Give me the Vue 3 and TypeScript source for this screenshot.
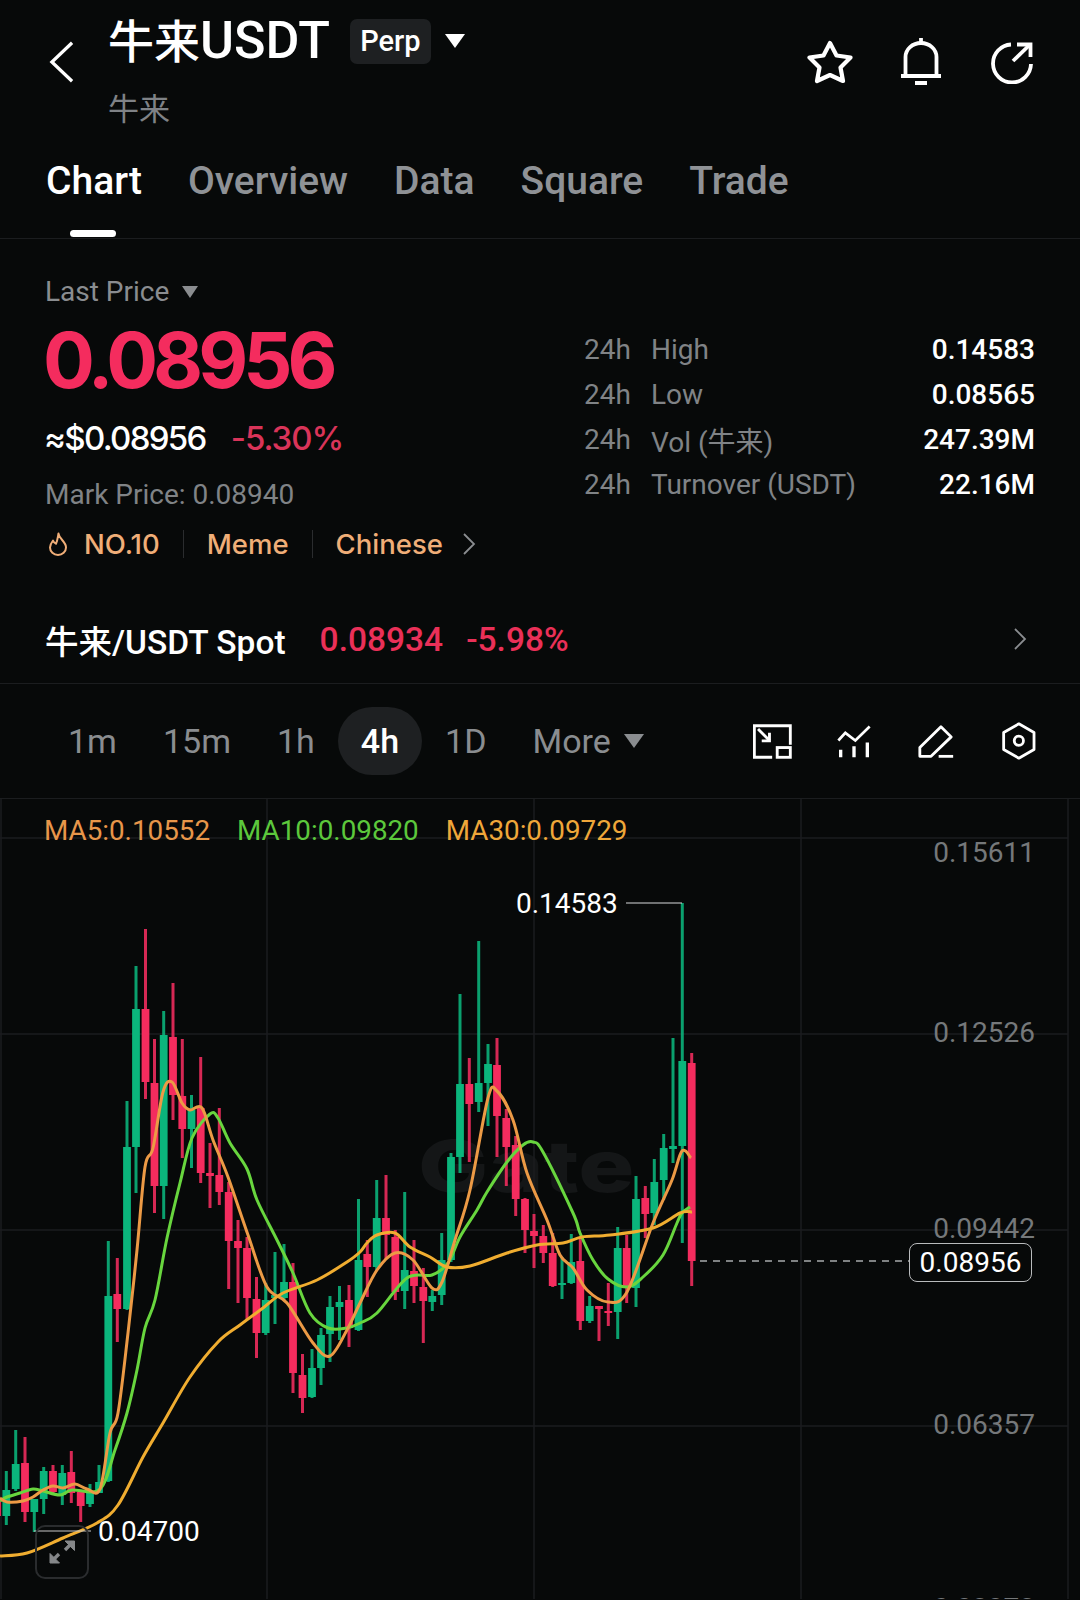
<template>
  <div class="page">
    <header class="top-bar">
      <svg class="back" viewBox="0 0 26 42" fill="none" stroke="#fff" stroke-width="3.4">
        <path d="M24 1 L3 21 L24 41" />
      </svg>
      <div class="title-block">
        <div class="title-row">
          <span class="title">牛来<span class="title-latin">USDT</span></span>
          <span class="perp">Perp</span>
          <i class="caret caret-white"></i>
        </div>
        <div class="subtitle">牛来</div>
      </div>
      <div class="actions">
        <svg class="icon-star" viewBox="0 0 46 44" fill="none" stroke="#fff" stroke-width="4.2" stroke-linejoin="round">
          <path d="M23 3 L29.5 15.5 L43.5 17.5 L33.5 27.5 L36 41 L23 35 L10 41 L12.5 27.5 L2.5 17.5 L16.5 15.5 Z" />
        </svg>
        <svg class="icon-bell" viewBox="0 0 40 47" fill="none" stroke="#fff" stroke-width="3.8">
          <path d="M4.5 37 V19 A15.5 14 0 0 1 35.5 19 V37" />
          <path d="M0 38 H40" />
          <path d="M20 0 V6" />
          <path d="M14 45 H26" stroke-width="4" />
        </svg>
        <svg class="icon-share" viewBox="0 0 42 42" fill="none" stroke="#fff" stroke-width="3.8">
          <path d="M20 2.5 A19 19 0 1 0 40 22" />
          <path d="M22 19 L38 3.5" />
          <path d="M26 2.5 H39.5 V15" />
        </svg>
      </div>
    </header>

    <nav class="tabs">
      <span v-for="(t, i) in tabs" :key="t" class="tab" :class="{ active: i === 0 }">{{ t }}</span>
    </nav>

    <section class="quote">
      <div class="quote-left">
        <div class="last-label">Last Price <i class="caret caret-gray"></i></div>
        <div class="price">0.08956</div>
        <div class="sub-price">
          <span class="usd">≈$0.08956</span>
          <span class="change">-5.30%</span>
        </div>
        <div class="mark">Mark Price: 0.08940</div>
        <div class="tags">
          <svg class="flame" viewBox="0 0 20 24" fill="none" stroke="#f0ae78" stroke-width="2" stroke-linejoin="round">
            <path d="M10.500 1.500 C11 7 18 9.500 18 15.500 A8 7.500 0 0 1 2 15.500 C2 12.500 3.500 10.500 5 8.500 C5.800 10.500 6.800 11.500 8 11.800 C9.500 8.500 9.800 5 10.500 1.500 Z" />
          </svg>
          <span class="tag-first">NO.10</span>
          <span class="tag-sep"></span>
          <span>Meme</span>
          <span class="tag-sep"></span>
          <span>Chinese</span>
          <svg class="tag-chevron" viewBox="0 0 14 24" fill="none" stroke="#8a8d90" stroke-width="1.8">
            <path d="M2 2 L12 12 L2 22" />
          </svg>
        </div>
      </div>
      <div class="quote-right">
        <div v-for="s in stats" :key="s.label" class="stat">
          <span class="stat-period">24h</span>
          <span class="stat-label">{{ s.label }}</span>
          <span class="stat-value">{{ s.value }}</span>
        </div>
      </div>
    </section>

    <div class="spot-row">
      <span class="spot-name">牛来/USDT Spot</span>
      <span class="spot-price">0.08934</span>
      <span class="spot-change">-5.98%</span>
      <svg class="spot-chevron" viewBox="0 0 14 24" fill="none" stroke="#8a8d90" stroke-width="1.8">
        <path d="M2 2 L12 12 L2 22" />
      </svg>
    </div>

    <div class="toolbar">
      <span v-for="f in frames" :key="f" class="frame" :class="{ selected: f === '4h' }">{{ f }}</span>
      <span class="frame more">More <i class="caret caret-more"></i></span>
      <div class="tools">
        <svg class="tool t1" viewBox="160 103 116 104" fill="none" stroke="#fff" stroke-width="8.500">
          <path d="M217 202 H164 V108 H271 V165" />
          <rect x="232" y="173" width="39" height="29" />
          <path d="M175 118 L209 152" />
          <path d="M209 129 V153 H186" />
        </svg>
        <svg class="tool t2" viewBox="412 105 102 98" fill="none" stroke="#fff" stroke-width="8">
          <path d="M416 151 L437 128 L467 151 L510 109" />
          <path d="M423 179 V201 M463 168 V201 M503 157 V201" stroke-width="10" />
        </svg>
        <svg class="tool t3" viewBox="656 102 108 100" fill="none" stroke="#fff" stroke-width="8.500" stroke-linejoin="round">
          <path d="M661 197 V170 L725 107 L756 138 L695 197 Z" />
          <path d="M718 197 H762" />
        </svg>
        <svg class="tool t4" viewBox="904 99 103 114" fill="none" stroke="#fff" stroke-width="8.500" stroke-linejoin="round">
          <path d="M955 104 L1001 130 V182 L955 208 L909 182 V130 Z" />
          <circle cx="955" cy="155" r="14" />
        </svg>
      </div>
    </div>

    <div class="chart">
      <span class="watermark">Gate</span>
      <svg class="plot" viewBox="0 798 1080 802" width="1080" height="802" fill="none">
        <g stroke="#1b1d1f" stroke-width="1.500">
          <path v-for="y in gridY" :key="y" :d="`M0 ${y} H1068`" />
          <path v-for="x in gridX" :key="x" :d="`M${x} 798 V1600`" />
        </g>
        <g v-for="c in candleList" :key="c.x">
          <path :d="`M${c.x} ${c.wickTop} V${c.wickBottom}`" :stroke="c.color" stroke-width="3" stroke-opacity="0.88" />
          <rect :x="c.x - 3.900" :y="c.top" width="7.800" :height="c.height" :fill="c.color" />
        </g>
        <path :d="ma10Path" stroke="#68d63e" stroke-width="3" />
        <path :d="ma5Path" stroke="#ec9a45" stroke-width="3" />
        <path :d="ma30Path" stroke="#f0ad30" stroke-width="3" />
        <path d="M626 903 H682" stroke="#d8dadb" stroke-width="1.200" />
        <path d="M34 1531 H91" stroke="#c8c8c8" stroke-width="1.200" />
        <path d="M700 1261 H909" stroke="#a8aaac" stroke-width="1.500" stroke-dasharray="7 6" />
      </svg>
      <div class="legend">
        <span class="ma5">MA5:0.10552</span>
        <span class="ma10">MA10:0.09820</span>
        <span class="ma30">MA30:0.09729</span>
      </div>
      <span v-for="a in axis" :key="a.text" class="axis-label" :style="{ top: a.y - 798 - 18 + 'px' }">{{ a.text }}</span>
      <span class="peak peak-high">0.14583</span>
      <span class="peak peak-low">0.04700</span>
      <span class="current">0.08956</span>
      <div class="expand">
        <svg viewBox="0 0 28 26" fill="none" stroke="#858789" stroke-width="3.400">
          <path d="M3 23 L11 15" />
          <path d="M17 11 L25 3" />
          <path d="M2 14.500 V24 H11.500 Z" fill="#858789" stroke-width="1" />
          <path d="M17 2 H26.500 V11.500 Z" fill="#858789" stroke-width="1" />
        </svg>
      </div>
    </div>
  </div>
</template>

<script setup lang="ts">
import { computed } from 'vue'

type Point = [number, number]
// x, colour, wick top, body top, body bottom, wick bottom
type Candle = [number, 'g' | 'r', number, number, number, number]

const tabs = ['Chart', 'Overview', 'Data', 'Square', 'Trade']
const frames = ['1m', '15m', '1h', '4h', '1D']
const stats = [
  { label: 'High', value: '0.14583' },
  { label: 'Low', value: '0.08565' },
  { label: 'Vol (牛来)', value: '247.39M' },
  { label: 'Turnover (USDT)', value: '22.16M' }
]
const axis = [
  { text: '0.15611', y: 852 },
  { text: '0.12526', y: 1032 },
  { text: '0.09442', y: 1228 },
  { text: '0.06357', y: 1424 },
  { text: '0.03273', y: 1608 }
]
const gridY = [838, 1034, 1230, 1426]
const gridX = [1, 267, 534, 801, 1068]

const candles: Candle[] = [
  [-3, 'r', 1500, 1500, 1516, 1517], [6.3, 'g', 1471, 1490, 1516, 1525], [15.7, 'g', 1430, 1464, 1489, 1491],
  [25, 'r', 1437, 1463, 1512, 1522], [34.3, 'g', 1499, 1499, 1512, 1532], [43.7, 'g', 1467, 1471, 1499, 1514],
  [53, 'r', 1465, 1471, 1492, 1493], [62.3, 'g', 1465, 1473, 1495, 1505], [71.3, 'r', 1451, 1472, 1493, 1503],
  [80.7, 'r', 1490, 1492, 1506, 1522], [90, 'g', 1484, 1493, 1504, 1507], [99, 'g', 1465, 1482, 1493, 1493],
  [108.3, 'g', 1241, 1296, 1481, 1482], [117.3, 'r', 1258, 1294, 1309, 1342], [127, 'g', 1101, 1147, 1309, 1310],
  [136, 'g', 966, 1009, 1147, 1193], [145.500, 'r', 929, 1009, 1082, 1099], [154.500, 'r', 1039, 1083, 1186, 1213],
  [163.700, 'g', 1011, 1035, 1186, 1219], [173, 'r', 983, 1037, 1095, 1120], [182.300, 'r', 1039, 1096, 1129, 1158],
  [191.500, 'g', 1095, 1110, 1129, 1168], [200.700, 'r', 1057, 1108, 1173, 1183], [210, 'r', 1143, 1173, 1176, 1208],
  [219.300, 'r', 1108, 1175, 1192, 1205], [228.700, 'r', 1182, 1192, 1241, 1289], [238, 'r', 1220, 1241, 1248, 1303],
  [247, 'r', 1237, 1248, 1298, 1319], [256.500, 'r', 1277, 1299, 1333, 1358], [265.700, 'g', 1283, 1300, 1333, 1335],
  [275, 'g', 1252, 1295, 1298, 1324], [284, 'g', 1244, 1282, 1298, 1300], [293, 'r', 1263, 1282, 1373, 1393],
  [302.500, 'r', 1354, 1375, 1398, 1413], [312, 'g', 1349, 1368, 1397, 1398], [321, 'g', 1328, 1335, 1368, 1385],
  [330, 'g', 1296, 1307, 1334, 1362], [339.500, 'g', 1286, 1302, 1307, 1340], [349, 'r', 1285, 1300, 1328, 1347],
  [358.500, 'g', 1199, 1260, 1330, 1331], [367.300, 'r', 1240, 1254, 1267, 1297], [376.700, 'g', 1180, 1218, 1267, 1270],
  [386, 'r', 1175, 1218, 1235, 1259], [395.300, 'r', 1230, 1237, 1292, 1300], [404.700, 'g', 1192, 1270, 1291, 1309],
  [414, 'r', 1240, 1271, 1286, 1303], [423.300, 'r', 1268, 1287, 1301, 1343], [432.300, 'g', 1290, 1296, 1302, 1311],
  [441.700, 'g', 1233, 1260, 1295, 1305], [451, 'g', 1153, 1157, 1260, 1262], [460, 'g', 994, 1084, 1157, 1173],
  [469.300, 'r', 1058, 1084, 1104, 1162], [478.700, 'g', 941, 1083, 1102, 1112], [488, 'g', 1044, 1064, 1083, 1126],
  [497, 'r', 1038, 1065, 1116, 1157], [506.300, 'r', 1109, 1118, 1147, 1186], [515.700, 'r', 1136, 1145, 1199, 1216],
  [525, 'r', 1198, 1199, 1230, 1253], [534, 'r', 1214, 1231, 1236, 1268], [543.300, 'r', 1225, 1236, 1253, 1263],
  [552.700, 'r', 1233, 1253, 1286, 1287], [562, 'g', 1257, 1283, 1285, 1299], [571.300, 'g', 1234, 1262, 1283, 1284],
  [580.300, 'r', 1238, 1261, 1321, 1330], [589.700, 'g', 1296, 1306, 1321, 1323], [599, 'r', 1306, 1306, 1309, 1341],
  [608.300, 'r', 1283, 1311, 1313, 1326], [617.700, 'g', 1227, 1248, 1312, 1339], [626.700, 'r', 1235, 1248, 1288, 1303],
  [636, 'g', 1176, 1199, 1288, 1307], [645.300, 'r', 1186, 1198, 1214, 1238], [654.300, 'g', 1159, 1182, 1213, 1225],
  [663.700, 'g', 1134, 1148, 1180, 1200], [673, 'g', 1038, 1146, 1149, 1163], [682.300, 'g', 903, 1061, 1146, 1243],
  [691.700, 'r', 1053, 1063, 1261, 1286]
]

const ma5: Point[] = [
  [0, 1498], [7, 1502], [23, 1501], [33, 1497], [43, 1490], [53, 1486], [63, 1488], [75, 1484], [87, 1489], [100, 1489],
  [110, 1433], [118, 1413], [128, 1333], [137, 1250], [145, 1167], [153, 1148], [163, 1092], [172, 1082], [182, 1103],
  [190, 1110], [202, 1108], [213, 1140], [228, 1177], [248, 1235], [267, 1287], [287, 1303], [313, 1343], [330, 1356],
  [347, 1330], [360, 1303], [377, 1270], [395, 1253], [413, 1260], [432, 1288], [442, 1282], [455, 1240], [470, 1190],
  [488, 1098], [497, 1091], [513, 1120], [527, 1173], [547, 1220], [560, 1255], [573, 1268], [587, 1290], [608, 1302],
  [627, 1292], [653, 1223], [672, 1180], [682, 1151], [691, 1158]
]
const ma10: Point[] = [
  [0, 1501], [7, 1497], [20, 1493], [33, 1489], [43, 1491], [60, 1495], [72, 1490], [100, 1489], [115, 1450], [127, 1413],
  [137, 1370], [145, 1328], [155, 1300], [167, 1238], [180, 1183], [192, 1138], [210, 1114], [218, 1118], [230, 1143],
  [247, 1169], [257, 1200], [277, 1240], [293, 1273], [310, 1313], [328, 1328], [347, 1328], [360, 1323], [377, 1313],
  [407, 1278], [432, 1275], [448, 1263], [460, 1237], [477, 1210], [487, 1192], [507, 1162], [523, 1145], [533, 1142],
  [543, 1152], [573, 1213], [580, 1233], [593, 1260], [608, 1279], [627, 1287], [643, 1277], [663, 1255], [677, 1223],
  [682, 1213], [690, 1207]
]
const ma30: Point[] = [
  [0, 1556], [27, 1553], [63, 1538], [97, 1523], [118, 1505], [143, 1457], [163, 1423], [190, 1377], [218, 1342],
  [240, 1325], [263, 1308], [283, 1293], [317, 1280], [347, 1262], [360, 1252], [367, 1243], [377, 1235], [395, 1233],
  [410, 1247], [430, 1257], [447, 1267], [470, 1266], [507, 1253], [537, 1245], [563, 1243], [582, 1237], [610, 1235],
  [653, 1228], [680, 1213], [692, 1212]
]

const candleList = computed(() =>
  candles.map(([x, c, wickTop, top, bottom, wickBottom]) => ({
    x,
    color: c === 'g' ? '#0bb57c' : '#f42c5e',
    wickTop,
    wickBottom,
    top,
    height: bottom - top
  }))
)

// catmull-rom through the sampled points, keeps the MA lines round
const smooth = (pts: Point[]): string => {
  let d = `M${pts[0][0]} ${pts[0][1]}`
  for (let i = 0; i < pts.length - 1; i++) {
    const p0 = pts[Math.max(i - 1, 0)]
    const p1 = pts[i]
    const p2 = pts[i + 1]
    const p3 = pts[Math.min(i + 2, pts.length - 1)]
    const c1x = p1[0] + (p2[0] - p0[0]) / 6
    const c1y = p1[1] + (p2[1] - p0[1]) / 6
    const c2x = p2[0] - (p3[0] - p1[0]) / 6
    const c2y = p2[1] - (p3[1] - p1[1]) / 6
    d += ` C${c1x.toFixed(1)} ${c1y.toFixed(1)} ${c2x.toFixed(1)} ${c2y.toFixed(1)} ${p2[0]} ${p2[1]}`
  }
  return d
}

const ma5Path = computed(() => smooth(ma5))
const ma10Path = computed(() => smooth(ma10))
const ma30Path = computed(() => smooth(ma30))
</script>

<style>
html,
body {
  margin: 0;
  background: #070909;
}
</style>

<style scoped>
.page {
  width: 1080px;
  height: 1600px;
  overflow: hidden;
  background: #070909;
  color: #fff;
  font-family: Roboto, "Noto Sans CJK SC", sans-serif;
}

.top-bar {
  display: flex;
  height: 155px;
  padding: 18px 47px 0 49px;
  box-sizing: border-box;
}

.back {
  width: 25px;
  height: 42px;
  margin-top: 23px;
  flex: none;
}

.title-block {
  margin-left: 34px;
}

.title-row {
  display: flex;
  align-items: center;
  height: 46px;
}

.title {
  font-size: 46px;
  font-weight: 500;
  line-height: 46px;
}

.title-latin {
  font-size: 52px;
}

.perp {
  margin-left: 20px;
  width: 81px;
  height: 45px;
  line-height: 45px;
  text-align: center;
  font-size: 29px;
  font-weight: 500;
  background: #1e2022;
  border-radius: 7px;
}

.caret {
  display: inline-block;
  width: 0;
  height: 0;
  border-style: solid;
  border-color: transparent;
}

.caret-white {
  margin-left: 14px;
  border-width: 14px 10px 0;
  border-top-color: #fff;
}

.caret-gray {
  margin-left: 6px;
  border-width: 12px 8px 0;
  border-top-color: #8a8d90;
  vertical-align: 3px;
}

.caret-more {
  margin-left: 5px;
  border-width: 14px 10px 0;
  border-top-color: #8a8d90;
  vertical-align: 5px;
}

.subtitle {
  margin-top: 28px;
  font-size: 31px;
  line-height: 36px;
  color: #7f8286;
}

.actions {
  margin-left: auto;
  display: flex;
}

.icon-star {
  width: 46px;
  height: 44px;
  margin-top: 22px;
}

.icon-bell {
  width: 40px;
  height: 47px;
  margin: 20px 0 0 48px;
}

.icon-share {
  width: 42px;
  height: 42px;
  margin: 24px 0 0 50px;
}

.tabs {
  display: flex;
  gap: 46px;
  height: 83px;
  padding-left: 46px;
  border-bottom: 1px solid #1b1d1f;
}

.tab {
  position: relative;
  font-size: 39px;
  font-weight: 500;
  line-height: 52px;
  color: #8f9296;
}

.tab.active {
  color: #fff;
}

.tab.active::after {
  content: "";
  position: absolute;
  left: 24px;
  bottom: 1px;
  width: 46px;
  height: 7px;
  border-radius: 4px;
  background: #fff;
}

.quote {
  display: flex;
  justify-content: space-between;
  padding: 36px 45px 37px 45px;
}

.last-label {
  font-size: 28px;
  line-height: 34px;
  color: #8a8d90;
}

.price {
  margin-top: 11px;
  margin-left: -2px;
  font-family: Inter, sans-serif;
  font-size: 77px;
  font-weight: 700;
  line-height: 80px;
  letter-spacing: -5px;
  color: #f42c5e;
}

.sub-price {
  margin-top: 18px;
  margin-left: -1px;
  display: flex;
  gap: 25px;
  font-family: Inter, sans-serif;
  font-size: 33px;
  font-weight: 500;
  line-height: 40px;
}

.usd {
  letter-spacing: -1.700px;
}

.change {
  letter-spacing: -1px;
  color: #d93459;
}

.mark {
  margin-top: 20px;
  font-size: 28px;
  line-height: 34px;
  color: #808386;
}

.tags {
  margin-top: 15px;
  display: flex;
  align-items: center;
  font-family: Inter, sans-serif;
  font-size: 27.500px;
  font-weight: 500;
  line-height: 34px;
  color: #f0ae78;
}

.flame {
  width: 20px;
  height: 24px;
  margin: 0 16px 0 3px;
}

.tag-sep {
  width: 1px;
  height: 28px;
  margin: 0 23px;
  background: #2a2c2e;
}

.tag-chevron {
  width: 14px;
  height: 24px;
  margin-left: 19px;
}

.quote-right {
  width: 451px;
  margin-top: 52px;
}

.stat {
  display: flex;
  height: 45px;
  align-items: center;
  font-size: 28px;
  color: #808386;
}

.stat-period {
  width: 67px;
}

.stat-value {
  margin-left: auto;
  font-size: 28px;
  font-weight: 500;
  color: #fff;
}

.spot-row {
  display: flex;
  align-items: center;
  height: 86px;
  padding: 0 53px 3px 45px;
  box-sizing: border-box;
  border-bottom: 1px solid #1b1d1f;
  font-size: 33.500px;
  font-weight: 500;
}

.spot-price {
  margin-left: 34px;
  color: #ea3058;
}

.spot-change {
  margin-left: 23px;
  color: #ea3058;
}

.spot-chevron {
  margin-left: auto;
  width: 14px;
  height: 24px;
}

.toolbar {
  display: flex;
  align-items: center;
  height: 114px;
  padding: 0 44px 0 45px;
}

.frame {
  padding: 0 23px;
  font-size: 34px;
  line-height: 68px;
  color: #8a8d90;
}

.frame.selected {
  font-weight: 500;
  color: #fff;
  background: #1e2022;
  border-radius: 34px;
}

.tools {
  margin-left: auto;
  display: flex;
  align-items: center;
}

.tool {
  flex: none;
}

.t1 {
  width: 39px;
  height: 35px;
}

.t2 {
  width: 34px;
  height: 33px;
  margin-left: 45px;
}

.t3 {
  width: 36px;
  height: 33px;
  margin-left: 47px;
}

.t4 {
  width: 34px;
  height: 38px;
  margin-left: 48px;
}

.chart {
  position: relative;
  height: 801px;
  border-top: 1px solid #1b1d1f;
  box-sizing: border-box;
  overflow: hidden;
}

.plot {
  position: absolute;
  left: 0;
  top: -1px;
}

.watermark {
  position: absolute;
  left: 418px;
  top: 322px;
  font-family: Inter, sans-serif;
  font-size: 72px;
  font-weight: 800;
  line-height: 90px;
  transform: scaleX(1.3);
  transform-origin: left center;
  color: #141617;
}

.legend {
  position: absolute;
  left: 44px;
  top: 14px;
  display: flex;
  gap: 27px;
  font-size: 27.800px;
  line-height: 36px;
}

.ma5 {
  color: #e8964a;
}

.ma10 {
  color: #5cc83c;
}

.ma30 {
  color: #efa73a;
}

.axis-label {
  position: absolute;
  right: 45px;
  font-size: 28px;
  line-height: 36px;
  color: #75787a;
}

.peak {
  position: absolute;
  font-size: 28px;
  line-height: 36px;
  color: #fff;
}

.peak-high {
  left: 516px;
  top: 87px;
}

.peak-low {
  left: 98px;
  top: 715px;
}

.current {
  position: absolute;
  left: 909px;
  top: 444px;
  width: 123px;
  height: 39px;
  box-sizing: border-box;
  border: 1px solid #b9bbbd;
  border-radius: 8px;
  background: #070909;
  font-size: 28px;
  line-height: 37px;
  text-align: center;
}

.expand {
  position: absolute;
  left: 35px;
  top: 726px;
  width: 54px;
  height: 54px;
  box-sizing: border-box;
  border: 2px solid #2a2c2e;
  border-radius: 10px;
  display: flex;
  align-items: center;
  justify-content: center;
}

.expand svg {
  width: 28px;
  height: 26px;
}
</style>
